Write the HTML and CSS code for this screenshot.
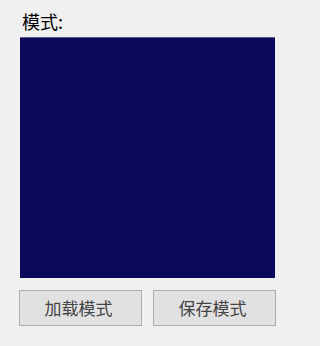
FILE: index.html
```html
<!DOCTYPE html>
<html lang="zh">
<head>
<meta charset="utf-8">
<link rel="stylesheet" href="styles.css">
</head>
<body>
<div class="panel">
  <div class="label">模式:</div>
  <div class="canvas"></div>
  <div class="actions">
    <button class="btn">加载模式</button>
    <button class="btn">保存模式</button>
  </div>
</div>
</body>
</html>
```
FILE: styles.css
```css
html, body {
  margin: 0;
  padding: 0;
  background: #f0f0f0;
}
.panel {
  width: 292px;
  height: 346px;
  display: flex;
  flex-direction: column;
  font-family: "Noto Sans CJK SC", "Noto Sans", sans-serif;
}
.label {
  margin: 11px 0 0 22px;
  height: 20px;
  line-height: 20px;
  font-size: 18px;
  color: #000;
}
.canvas {
  margin: 6px 0 0 20px;
  width: 255px;
  height: 241px;
  box-sizing: border-box;
  background: #0b095c;
  border-top: 1px solid #5a5a8c;
}
.actions {
  margin: 12px 0 0 19px;
  display: flex;
  gap: 11px;
}
.btn {
  width: 123px;
  height: 36px;
  box-sizing: border-box;
  background: #e1e1e1;
  border: 1px solid #adadad;
  border-radius: 0;
  padding: 0 4px 0 0;
  font-family: "Noto Sans CJK SC", "Noto Sans", sans-serif;
  font-size: 17px;
  color: #444;
  line-height: 34px;
}
```
